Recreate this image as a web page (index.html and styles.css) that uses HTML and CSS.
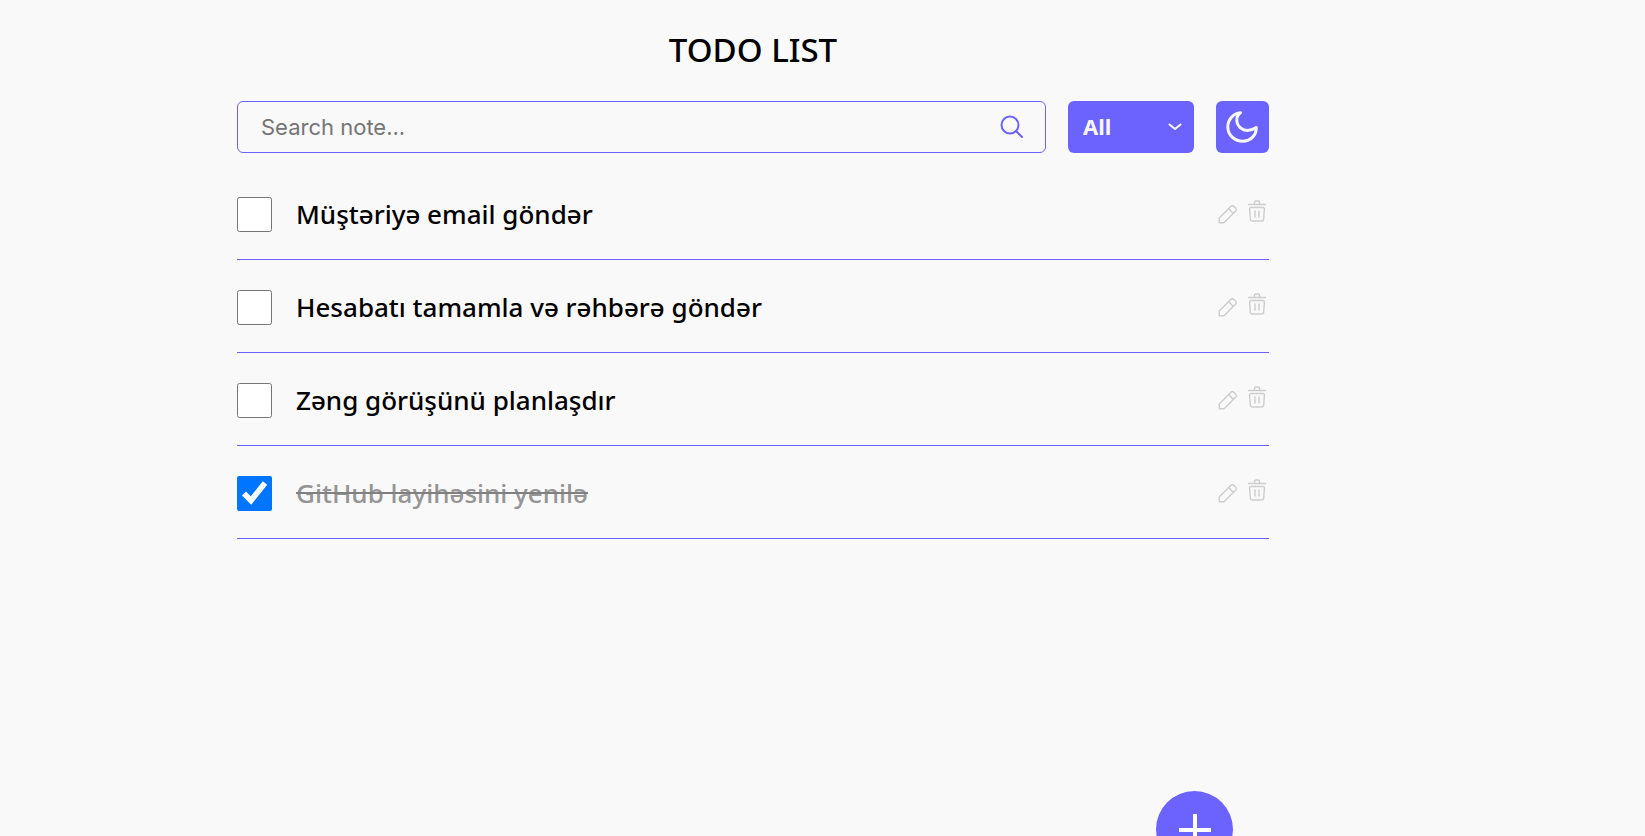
FILE: index.html
```html
<!DOCTYPE html>
<html lang="az">
<head>
<meta charset="utf-8">
<meta name="viewport" content="width=device-width, initial-scale=1">
<title>Todo List</title>
<link rel="stylesheet" href="styles.css">
</head>
<body>
<svg class="sprite" aria-hidden="true">
  <symbol id="pencil" viewBox="0 0 20 20"><path d="M1.200 18.800V14L13.200 2Q14.300 1 15.400 2L18 4.600Q19 5.700 18 6.800L6 18.800ZM10.600 4.600L15.400 9.400"/></symbol>
  <symbol id="trash" viewBox="0 0 18 22"><path d="M.5 4.500H17.500M6.500 4.500V2.500Q6.500 1 8 1H10Q11.500 1 11.500 2.500V4.500M3 7.500H15Q16.500 7.500 16.400 9L15.700 19Q15.500 21 13.500 21H4.500Q2.500 21 2.300 19L1.600 9Q1.500 7.500 3 7.500ZM7 11V17M11 11V17"/></symbol>
</svg>
<main class="page">
  <h1 class="title">TODO LIST</h1>
  <div class="toolbar">
    <form class="search">
      <input class="search-input" type="text" placeholder="Search note..." aria-label="Search note">
      <button class="search-button" type="button" aria-label="Search"><svg width="24" height="24" viewBox="0 0 24 24"><circle cx="10" cy="10" r="8.500"/><path d="M16 16L22 22"/></svg></button>
    </form>
    <div class="filter">
      <select class="filter-select" aria-label="Filter"><option>All</option><option>Complete</option><option>Incomplete</option></select>
      <svg class="filter-arrow" width="14" height="8" viewBox="0 0 14 8"><path d="M1.500 1.500L7 6L12.500 1.500"/></svg>
    </div>
    <button class="theme" type="button" aria-label="Dark mode"><svg width="32" height="32" viewBox="0 0 32 32"><path d="M14.500 1.800C9 5.500 10 13.500 15 17.200C19.500 20.500 25.500 19.500 30.200 16.500C30.800 24 24.500 30.200 17 30.200C8.500 30.200 1.800 24 1.800 16C1.800 8.500 7.500 2.200 14.500 1.800Z"/></svg></button>
  </div>
  <ul class="list">
    <li class="item"><input class="check" type="checkbox" id="t1"><label class="text" for="t1">Müştəriyə email göndər</label><button class="action" type="button" aria-label="Edit"><svg class="pencil"><use href="#pencil"/></svg></button><button class="action" type="button" aria-label="Delete"><svg class="trash"><use href="#trash"/></svg></button></li>
    <li class="item"><input class="check" type="checkbox" id="t2"><label class="text" for="t2">Hesabatı tamamla və rəhbərə göndər</label><button class="action" type="button" aria-label="Edit"><svg class="pencil"><use href="#pencil"/></svg></button><button class="action" type="button" aria-label="Delete"><svg class="trash"><use href="#trash"/></svg></button></li>
    <li class="item"><input class="check" type="checkbox" id="t3"><label class="text" for="t3">Zəng görüşünü planlaşdır</label><button class="action" type="button" aria-label="Edit"><svg class="pencil"><use href="#pencil"/></svg></button><button class="action" type="button" aria-label="Delete"><svg class="trash"><use href="#trash"/></svg></button></li>
    <li class="item"><input class="check" type="checkbox" id="t4" checked><label class="text" for="t4">GitHub layihəsini yenilə</label><button class="action" type="button" aria-label="Edit"><svg class="pencil"><use href="#pencil"/></svg></button><button class="action" type="button" aria-label="Delete"><svg class="trash"><use href="#trash"/></svg></button></li>
  </ul>
</main>
<button class="add" type="button" aria-label="Add note"><svg width="32" height="32" viewBox="0 0 32 32"><path d="M16 0V32M0 16H32"/></svg></button>
</body>
</html>
```
FILE: styles.css
```css
* { box-sizing: border-box; }
body {
  margin: 0;
  background: #f9f9f9;
  color: #000;
  font-family: "Noto Sans", "Open Sans", sans-serif;
}
svg { display: block; fill: none; stroke: currentColor; stroke-linecap: round; stroke-linejoin: round; }
button { padding: 0; border: 0; background: none; cursor: pointer; }
.sprite { position: absolute; width: 0; height: 0; }
.page { padding: 25px 376px 0 237px; }
.title { margin: 0; font-size: 33px; font-weight: 500; line-height: 50px; text-align: center; }
.toolbar { display: flex; gap: 22px; height: 52px; margin-top: 26px; }
.search {
  flex: 1;
  display: flex;
  align-items: center;
  padding: 0 21px 0 23px;
  border: 1px solid #6c63ff;
  border-radius: 6px;
}
.search-input {
  flex: 1;
  min-width: 0;
  padding: 0;
  border: 0;
  outline: 0;
  background: none;
  font-family: Inter, sans-serif;
  font-size: 22px;
}
.search-input::placeholder { color: #757575; }
.search-button { color: #6c63ff; }
.search-button svg { stroke-width: 2; }
.filter { position: relative; width: 126px; }
.filter-select {
  width: 100%;
  height: 100%;
  padding: 0 15px 2px;
  border: 0;
  border-radius: 6px;
  appearance: none;
  background: #6c63ff;
  color: #f7f7f7;
  font-family: inherit;
  font-size: 22px;
  font-weight: 700;
}
.filter-arrow { position: absolute; top: 22px; right: 12px; color: #f7f7f7; stroke-width: 2; pointer-events: none; }
.theme {
  display: flex;
  align-items: center;
  justify-content: center;
  width: 53px;
  padding-right: 2px;
  border-radius: 6px;
  background: #6c63ff;
  color: #f7f7f7;
}
.theme svg { stroke-width: 3; }
.list { margin: 14px 0 0; padding: 0; list-style: none; }
.item {
  display: flex;
  align-items: center;
  height: 93px;
  padding-top: 2px;
  border-bottom: 1px solid #6c63ff;
}
.check { width: 35px; height: 35px; margin: 0; }
.text { flex: 1; padding-left: 24px; font-size: 26px; font-weight: 500; line-height: 40px; }
.check:checked + .text { color: #959595; text-decoration: line-through #808080; }
.action { color: #cdcdcd; }
.action + .action { margin: 0 3px 6px 10px; }
.pencil { width: 20px; height: 20px; stroke-width: 1.400px; }
.trash { width: 18px; height: 22px; stroke-width: 1.400px; }
.add {
  position: fixed;
  right: 412px;
  bottom: -32px;
  display: flex;
  align-items: center;
  justify-content: center;
  width: 77px;
  height: 77px;
  border-radius: 50%;
  background: #6c63ff;
  color: #fff;
}
.add svg { stroke-width: 4; stroke-linecap: butt; }
```
